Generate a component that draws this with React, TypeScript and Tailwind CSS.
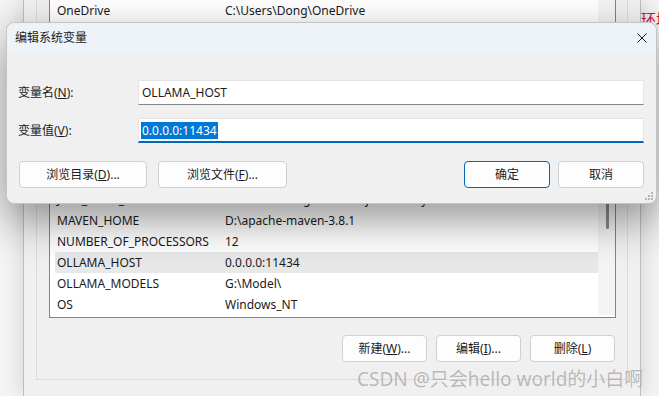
import React from "react";

const FONT = { fontFamily: '"Noto Sans", "Noto Sans CJK SC", sans-serif' };

interface Row {
  name: string;
  value: string;
}

const rows: Row[] = [
  { name: "OneDrive", value: "C:\\Users\\Dong\\OneDrive" },
  { name: "ComSpec", value: "C:\\Windows\\system32\\cmd.exe" },
  { name: "DriverData", value: "C:\\Windows\\System32\\Drivers\\DriverData" },
  { name: "GOPATH", value: "C:\\Users\\Dong\\go" },
  { name: "GRADLE_HOME", value: "D:\\gradle-8.5" },
  { name: "GRADLE_USER_HOME", value: "D:\\gradle-repo" },
  { name: "HADOOP_HOME", value: "D:\\hadoop-3.3.6" },
  { name: "JAVA_HOME", value: "C:\\Program Files\\Java\\jdk-17" },
  { name: "JRE_HOME", value: "C:\\Program Files\\Java\\jre" },
  { name: "JAVA_TOOL_OPTIONS", value: "-Dfile.encoding=UTF-8 -Djava.library" },
  { name: "MAVEN_HOME", value: "D:\\apache-maven-3.8.1" },
  { name: "NUMBER_OF_PROCESSORS", value: "12" },
  { name: "OLLAMA_HOST", value: "0.0.0.0:11434" },
  { name: "OLLAMA_MODELS", value: "G:\\Model\\" },
  { name: "OS", value: "Windows_NT" },
];

function WinButton({ children, w, primary }: { children: React.ReactNode; w: string; primary?: boolean }) {
  return (
    <div
      className={`${w} h-[27px] flex items-center justify-center rounded-[4px] bg-[#fdfdfd] text-[12px] text-[#1b1b1b] ${
        primary ? "border border-[#0067c0] shadow-[inset_0_0_0_1px_#ffffff]" : "border border-[#d0d0d0]"
      }`}
    >
      {children}
    </div>
  );
}

function Grip() {
  const dots = [
    [6, 0],
    [3, 3],
    [6, 3],
    [0, 6],
    [3, 6],
    [6, 6],
  ];
  return (
    <svg width="8" height="8" viewBox="0 0 8 8" className="absolute right-[3px] bottom-[3px]">
      {dots.map(([x, y], i) => (
        <rect key={i} x={x} y={y} width="2" height="2" fill="#b5b5b5" />
      ))}
    </svg>
  );
}

export default function App() {
  return (
    <div className="relative w-[659px] h-[396px] overflow-hidden bg-[#f4f4f4]" style={FONT}>
      {/* red text from the page behind, mostly hidden */}
      <div className="absolute left-[641px] top-[12px] w-[18px] overflow-hidden text-[15px] leading-none text-[#d0103a] whitespace-nowrap">
        环境
      </div>

      {/* back window: 环境变量 */}
      <div className="absolute left-[23px] top-0 w-[618px] h-[396px] bg-[#f0f0f0] border-x border-[#bdbdbd] shadow-[0_0_22px_rgba(0,0,0,0.14)]">
        <div className="mx-[12px] h-[380px] border-x border-b border-[#dcdcdc] pl-[12px] pr-[11px] flex flex-col">
          <div className="flex bg-white border-x border-b border-[#838383] pb-[2px]">
            <div className="flex-1 pl-[5px]">
              {rows.map((r) => (
                <div
                  key={r.name}
                  className={`h-[21px] flex items-center pl-[2px] text-[12px] text-[#1b1b1b] whitespace-nowrap ${
                    r.name === "OLLAMA_HOST" ? "bg-[#e8e8e8]" : ""
                  }`}
                >
                  <span className="w-[168px] shrink-0">{r.name}</span>
                  <span>{r.value}</span>
                </div>
              ))}
            </div>
            <div className="w-[17px] shrink-0 bg-[#f4f4f4] flex justify-center">
              <div className="mt-[150px] w-[3px] h-[79px] rounded-full bg-[#8a8a8a] ml-[1px]" />
            </div>
          </div>
          <div className="mt-[17px] flex justify-end gap-[9px] pr-[1px]">
            <WinButton w="w-[85px]">
              新建(<span className="underline">W</span>)...
            </WinButton>
            <WinButton w="w-[85px]">
              编辑(<span className="underline">I</span>)...
            </WinButton>
            <WinButton w="w-[85px]">
              删除(<span className="underline">L</span>)
            </WinButton>
          </div>
        </div>
      </div>

      {/* dialog: 编辑系统变量 */}
      <div className="absolute left-[6px] top-[22px] w-[651px] h-[182px] rounded-[8px] border border-[#c4c4c4] bg-[#f0f0f0] shadow-[0_16px_44px_rgba(0,0,0,0.42)] flex flex-col">
        <div className="h-[30px] shrink-0 rounded-t-[8px] bg-[#eef2f9] flex items-center justify-between pl-[8px] pr-[9px]">
          <span className="text-[12px] text-[#1b1b1b]">编辑系统变量</span>
          <svg width="10" height="10" viewBox="0 0 10 10">
            <path d="M0.5 0.5 L9.5 9.5 M9.5 0.5 L0.5 9.5" stroke="#1b1b1b" strokeWidth="1" />
          </svg>
        </div>

        <div className="flex flex-col pl-[11px] pr-[12px] pt-[27px]">
          <div className="flex items-center">
            <span className="w-[120px] text-[12px] text-[#1b1b1b]">
              变量名(<span className="underline">N</span>):
            </span>
            <div className="flex-1 h-[25px] bg-white border border-[#e5e5e5] border-b-[#868686] flex items-center pl-[3px] text-[12px] text-[#1b1b1b]">
              OLLAMA_HOST
            </div>
          </div>
          <div className="flex items-center mt-[13px]">
            <span className="w-[120px] text-[12px] text-[#1b1b1b]">
              变量值(<span className="underline">V</span>):
            </span>
            <div className="flex-1 h-[25px] bg-white border border-[#e5e5e5] border-b-2 border-b-[#0067c0] flex items-center pl-[2px] text-[12px]">
              <span className="bg-[#0078d7] text-white px-[1px] leading-[17px]">0.0.0.0:11434</span>
            </div>
          </div>
          <div className="flex items-center mt-[18px] pl-[1px]">
            <WinButton w="w-[128px]">
              浏览目录(<span className="underline">D</span>)...
            </WinButton>
            <div className="ml-[11px]">
              <WinButton w="w-[129px]">
                浏览文件(<span className="underline">F</span>)...
              </WinButton>
            </div>
            <div className="ml-auto flex gap-[8px]">
              <WinButton w="w-[86px]" primary>
                确定
              </WinButton>
              <WinButton w="w-[86px]">取消</WinButton>
            </div>
          </div>
        </div>
        <Grip />
      </div>

      {/* watermark */}
      <div className="absolute left-[357px] top-[367px] text-[19px] leading-[24px] text-[rgba(120,120,120,0.5)] whitespace-nowrap [text-shadow:0_0_1px_rgba(255,255,255,0.6)]">
        CSDN @只会hello world的小白啊
      </div>
    </div>
  );
}
